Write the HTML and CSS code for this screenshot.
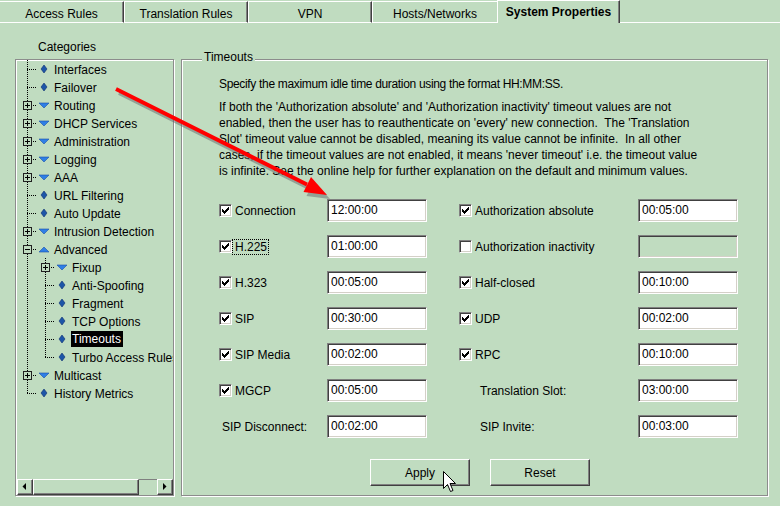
FILE: index.html
```html
<!DOCTYPE html>
<html>
<head>
<meta charset="utf-8">
<title>System Properties - Timeouts</title>
<link rel="stylesheet" href="styles.css">
</head>
<body>
<div class="tabs">
  <div class="tab tab-first">Access Rules</div>
  <div class="tab">Translation Rules</div>
  <div class="tab">VPN</div>
  <div class="tab tab-prev">Hosts/Networks</div>
  <div class="tab tab-active">System Properties</div>
  <div class="tab-fill"></div>
</div>

<div class="main">
  <div class="left">
    <div class="cat-label">Categories</div>
    <div class="tree-box">
      <div class="tree">
        <div class="row"><span class="g tee"></span><svg class="ic" width="16" height="18"><polygon class="dia" points="8,5 11,9 8,13 5,9"/></svg><span class="lbl">Interfaces</span></div>
        <div class="row"><span class="g tee"></span><svg class="ic" width="16" height="18"><polygon class="dia" points="8,5 11,9 8,13 5,9"/></svg><span class="lbl">Failover</span></div>
        <div class="row"><span class="g tee"><i class="exp plus"></i></span><svg class="ic" width="16" height="18"><polygon class="tri" points="3,7 13,7 8,12"/></svg><span class="lbl">Routing</span></div>
        <div class="row"><span class="g tee"><i class="exp plus"></i></span><svg class="ic" width="16" height="18"><polygon class="tri" points="3,7 13,7 8,12"/></svg><span class="lbl">DHCP Services</span></div>
        <div class="row"><span class="g tee"><i class="exp plus"></i></span><svg class="ic" width="16" height="18"><polygon class="tri" points="3,7 13,7 8,12"/></svg><span class="lbl">Administration</span></div>
        <div class="row"><span class="g tee"><i class="exp plus"></i></span><svg class="ic" width="16" height="18"><polygon class="tri" points="3,7 13,7 8,12"/></svg><span class="lbl">Logging</span></div>
        <div class="row"><span class="g tee"><i class="exp plus"></i></span><svg class="ic" width="16" height="18"><polygon class="tri" points="3,7 13,7 8,12"/></svg><span class="lbl">AAA</span></div>
        <div class="row"><span class="g tee"></span><svg class="ic" width="16" height="18"><polygon class="dia" points="8,5 11,9 8,13 5,9"/></svg><span class="lbl">URL Filtering</span></div>
        <div class="row"><span class="g tee"></span><svg class="ic" width="16" height="18"><polygon class="dia" points="8,5 11,9 8,13 5,9"/></svg><span class="lbl">Auto Update</span></div>
        <div class="row"><span class="g tee"><i class="exp plus"></i></span><svg class="ic" width="16" height="18"><polygon class="tri" points="3,7 13,7 8,12"/></svg><span class="lbl">Intrusion Detection</span></div>
        <div class="row"><span class="g tee"><i class="exp minus"></i></span><svg class="ic ic-open" width="16" height="18"><polygon class="tri" points="3,12 13,12 8,7"/></svg><span class="lbl">Advanced</span></div>
        <div class="row"><span class="g vert"></span><span class="g tee"><i class="exp plus"></i></span><svg class="ic" width="16" height="18"><polygon class="tri" points="3,7 13,7 8,12"/></svg><span class="lbl">Fixup</span></div>
        <div class="row"><span class="g vert"></span><span class="g tee"></span><svg class="ic" width="16" height="18"><polygon class="dia" points="8,5 11,9 8,13 5,9"/></svg><span class="lbl">Anti-Spoofing</span></div>
        <div class="row"><span class="g vert"></span><span class="g tee"></span><svg class="ic" width="16" height="18"><polygon class="dia" points="8,5 11,9 8,13 5,9"/></svg><span class="lbl">Fragment</span></div>
        <div class="row"><span class="g vert"></span><span class="g tee"></span><svg class="ic" width="16" height="18"><polygon class="dia" points="8,5 11,9 8,13 5,9"/></svg><span class="lbl">TCP Options</span></div>
        <div class="row"><span class="g vert"></span><span class="g tee"></span><svg class="ic" width="16" height="18"><polygon class="dia" points="8,5 11,9 8,13 5,9"/></svg><span class="lbl sel">Timeouts</span></div>
        <div class="row"><span class="g vert"></span><span class="g elbow"></span><svg class="ic" width="16" height="18"><polygon class="dia" points="8,5 11,9 8,13 5,9"/></svg><span class="lbl">Turbo Access Rules</span></div>
        <div class="row"><span class="g tee"><i class="exp plus"></i></span><svg class="ic" width="16" height="18"><polygon class="tri" points="3,7 13,7 8,12"/></svg><span class="lbl">Multicast</span></div>
        <div class="row"><span class="g elbow"></span><svg class="ic" width="16" height="18"><polygon class="dia" points="8,5 11,9 8,13 5,9"/></svg><span class="lbl">History Metrics</span></div>
      </div>
      <div class="hscroll">
        <div class="sb-btn"><svg width="14" height="14"><polygon points="8,3 8,10 4.5,6.5" fill="#000"/></svg></div>
        <div class="sb-thumb"></div>
        <div class="sb-track"></div>
        <div class="sb-btn"><svg width="14" height="14"><polygon points="5,3 5,10 8.5,6.5" fill="#000"/></svg></div>
      </div>
    </div>
  </div>

  <div class="group">
    <span class="group-title">Timeouts</span>
    <p class="intro">Specify the maximum idle time duration using the format HH:MM:SS.</p>
    <p class="desc">If both the 'Authorization absolute' and 'Authorization inactivity' timeout values are not<br>enabled, then the user has to reauthenticate on 'every' new connection.&nbsp; The 'Translation<br>Slot' timeout value cannot be disabled, meaning its value cannot be infinite.&nbsp; In all other<br>cases, if the timeout values are not enabled, it means 'never timeout' i.e. the timeout value<br>is infinite. See the online help for further explanation on the default and minimum values.</p>

    <div class="form">
      <div class="cell"><span class="cb on"><svg width="11" height="11"><path d="M2 4h1v3h-1zM3 5h1v3h-1zM4 6h1v3h-1zM5 5h1v3h-1zM6 4h1v3h-1zM7 3h1v3h-1zM8 2h1v3h-1z"/></svg></span><span class="cbl">Connection</span></div>
      <div class="cell"><input class="field" type="text" value="12:00:00"></div>
      <div class="cell c3"><span class="cb on"><svg width="11" height="11"><path d="M2 4h1v3h-1zM3 5h1v3h-1zM4 6h1v3h-1zM5 5h1v3h-1zM6 4h1v3h-1zM7 3h1v3h-1zM8 2h1v3h-1z"/></svg></span><span class="cbl">Authorization absolute</span></div>
      <div class="cell"><input class="field" type="text" value="00:05:00"></div>

      <div class="cell"><span class="cb on"><svg width="11" height="11"><path d="M2 4h1v3h-1zM3 5h1v3h-1zM4 6h1v3h-1zM5 5h1v3h-1zM6 4h1v3h-1zM7 3h1v3h-1zM8 2h1v3h-1z"/></svg></span><span class="cbl focus">H.225</span></div>
      <div class="cell"><input class="field" type="text" value="01:00:00"></div>
      <div class="cell c3"><span class="cb"></span><span class="cbl">Authorization inactivity</span></div>
      <div class="cell"><input class="field off" type="text" value="" disabled></div>

      <div class="cell"><span class="cb on"><svg width="11" height="11"><path d="M2 4h1v3h-1zM3 5h1v3h-1zM4 6h1v3h-1zM5 5h1v3h-1zM6 4h1v3h-1zM7 3h1v3h-1zM8 2h1v3h-1z"/></svg></span><span class="cbl">H.323</span></div>
      <div class="cell"><input class="field" type="text" value="00:05:00"></div>
      <div class="cell c3"><span class="cb on"><svg width="11" height="11"><path d="M2 4h1v3h-1zM3 5h1v3h-1zM4 6h1v3h-1zM5 5h1v3h-1zM6 4h1v3h-1zM7 3h1v3h-1zM8 2h1v3h-1z"/></svg></span><span class="cbl">Half-closed</span></div>
      <div class="cell"><input class="field" type="text" value="00:10:00"></div>

      <div class="cell"><span class="cb on"><svg width="11" height="11"><path d="M2 4h1v3h-1zM3 5h1v3h-1zM4 6h1v3h-1zM5 5h1v3h-1zM6 4h1v3h-1zM7 3h1v3h-1zM8 2h1v3h-1z"/></svg></span><span class="cbl">SIP</span></div>
      <div class="cell"><input class="field" type="text" value="00:30:00"></div>
      <div class="cell c3"><span class="cb on"><svg width="11" height="11"><path d="M2 4h1v3h-1zM3 5h1v3h-1zM4 6h1v3h-1zM5 5h1v3h-1zM6 4h1v3h-1zM7 3h1v3h-1zM8 2h1v3h-1z"/></svg></span><span class="cbl">UDP</span></div>
      <div class="cell"><input class="field" type="text" value="00:02:00"></div>

      <div class="cell"><span class="cb on"><svg width="11" height="11"><path d="M2 4h1v3h-1zM3 5h1v3h-1zM4 6h1v3h-1zM5 5h1v3h-1zM6 4h1v3h-1zM7 3h1v3h-1zM8 2h1v3h-1z"/></svg></span><span class="cbl">SIP Media</span></div>
      <div class="cell"><input class="field" type="text" value="00:02:00"></div>
      <div class="cell c3"><span class="cb on"><svg width="11" height="11"><path d="M2 4h1v3h-1zM3 5h1v3h-1zM4 6h1v3h-1zM5 5h1v3h-1zM6 4h1v3h-1zM7 3h1v3h-1zM8 2h1v3h-1z"/></svg></span><span class="cbl">RPC</span></div>
      <div class="cell"><input class="field" type="text" value="00:10:00"></div>

      <div class="cell"><span class="cb on"><svg width="11" height="11"><path d="M2 4h1v3h-1zM3 5h1v3h-1zM4 6h1v3h-1zM5 5h1v3h-1zM6 4h1v3h-1zM7 3h1v3h-1zM8 2h1v3h-1z"/></svg></span><span class="cbl">MGCP</span></div>
      <div class="cell"><input class="field" type="text" value="00:05:00"></div>
      <div class="cell c3"><span class="plain-r">Translation Slot:</span></div>
      <div class="cell"><input class="field" type="text" value="03:00:00"></div>

      <div class="cell"><span class="plain-l">SIP Disconnect:</span></div>
      <div class="cell"><input class="field" type="text" value="00:02:00"></div>
      <div class="cell c3"><span class="plain-r">SIP Invite:</span></div>
      <div class="cell"><input class="field" type="text" value="00:03:00"></div>
    </div>

    <div class="buttons">
      <button class="btn" type="button">Apply</button>
      <button class="btn" type="button">Reset</button>
    </div>
  </div>
</div>

<svg class="annot" width="780" height="506" viewBox="0 0 780 506">
  <g class="shadow" transform="translate(3,4)">
    <line x1="116" y1="89" x2="307" y2="184.5" stroke-width="4"/>
    <polygon points="327,195 303.5,192 311,177"/>
  </g>
  <g class="red">
    <line x1="116" y1="89" x2="307" y2="184.5" stroke-width="4"/>
    <polygon points="327,195 303.5,192 311,177"/>
  </g>
</svg>

<svg class="cursor" width="13" height="22" viewBox="0 0 13 22">
  <path d="M0.5 0.5 L0.5 17.5 L4.5 13.5 L7.5 20.5 L10 19.5 L7 12.5 L12.5 12.5 Z" fill="#fff" stroke="#000" stroke-width="1"/>
</svg>
</body>
</html>
```

FILE: styles.css
```css
* { box-sizing: border-box; }

html, body { margin: 0; padding: 0; }

body {
  width: 780px;
  height: 506px;
  overflow: hidden;
  position: relative;
  background: #c0dcc0;
  color: #000;
  font: 12px "Liberation Sans", Arial, sans-serif;
}

/* ---------- tabs ---------- */
.tabs {
  display: flex;
  align-items: flex-end;
  height: 23px;
}

.tab {
  flex: none;
  width: 124px;
  height: 22px;
  padding-top: 5px;
  line-height: 14px;
  text-align: center;
  white-space: nowrap;
  border: 1px solid #fff;
  border-right-color: #404040;
  box-shadow: inset -1px 0 0 #808080;
}

.tab-first { margin-left: -1px; width: 125px; }

.tab-prev {
  width: 125px;
  border-right: none;
  box-shadow: none;
}

.tab-active {
  width: 123px;
  height: 23px;
  padding-top: 4px;
  font-weight: bold;
  border-bottom: none;
}

.tab-fill {
  flex: 1;
  height: 1px;
  background: #fff;
}

/* ---------- main ---------- */
.main {
  display: flex;
  gap: 7px;
  padding: 17px 0 0 15px;
}

.left {
  display: flex;
  flex-direction: column;
  width: 159px;
}

.cat-label {
  height: 14px;
  line-height: 14px;
  padding-left: 23px;
  margin-bottom: 5px;
}

.tree-box {
  display: flex;
  flex-direction: column;
  height: 437px;
  border: 1px solid #8c8c8c;
  box-shadow: 1px 1px 0 #fff, inset 1px 1px 0 #fff;
}

.tree {
  flex: 1;
  padding-left: 2px;
  overflow: hidden;
}

.row {
  display: flex;
  height: 18px;
  white-space: nowrap;
}

.g {
  flex: none;
  display: flex;
  align-items: flex-start;
  width: 18px;
  height: 18px;
  padding: 5px 0 0 5px;
  background-repeat: no-repeat;
}

.g.tee {
  background-image:
    repeating-linear-gradient(to bottom, #000 0 1px, transparent 1px 2px),
    repeating-linear-gradient(to right, #000 0 1px, transparent 1px 2px);
  background-size: 1px 18px, 9px 1px;
  background-position: 9px 0, 9px 9px;
}

.g.elbow {
  background-image:
    repeating-linear-gradient(to bottom, #000 0 1px, transparent 1px 2px),
    repeating-linear-gradient(to right, #000 0 1px, transparent 1px 2px);
  background-size: 1px 10px, 9px 1px;
  background-position: 9px 0, 9px 9px;
}

.g.vert {
  background-image: repeating-linear-gradient(to bottom, #000 0 1px, transparent 1px 2px);
  background-size: 1px 18px;
  background-position: 9px 0;
}

.exp {
  display: block;
  width: 9px;
  height: 9px;
  border: 1px solid #202020;
  background-color: #c0dcc0;
  background-repeat: no-repeat;
}

.exp.plus {
  background-image: linear-gradient(#000, #000), linear-gradient(#000, #000);
  background-size: 5px 1px, 1px 5px;
  background-position: 1px 3px, 3px 1px;
}

.exp.minus {
  background-image: linear-gradient(#000, #000);
  background-size: 5px 1px;
  background-position: 1px 3px;
}

.ic { flex: none; display: block; }

.dia { fill: #1d56a8; stroke: #0d2f6e; stroke-width: 0.6; }
.tri { fill: #2f7fe6; stroke: #1a4fa8; stroke-width: 0.6; }

.lbl {
  margin-left: 2px;
  line-height: 20px;
}

.lbl.sel {
  align-self: center;
  line-height: 15px;
  padding: 1px 2px 0 1px;
  margin-left: 1px;
  background: #000;
  color: #fff;
}

/* horizontal scrollbar */
.hscroll {
  display: flex;
  height: 16px;
  margin-left: 1px;
}

.sb-btn, .sb-thumb {
  flex: none;
  height: 16px;
  background: #c0dcc0;
  border: 1px solid;
  border-color: #fff #404040 #404040 #fff;
  box-shadow: inset -1px -1px 0 #808080;
}

.sb-btn { width: 16px; }
.sb-btn svg { display: block; }

.sb-thumb { width: 106px; }

.sb-track {
  flex: 1;
  border-top: 1px solid #808080;
  background: #c0dcc0;
}

/* ---------- timeouts group ---------- */
.group {
  position: relative;
  width: 587px;
  height: 437px;
  margin-top: 19px;
  padding: 16px 0 0 37px;
  border: 1px solid #8c8c8c;
  box-shadow: 1px 1px 0 #fff, inset 1px 1px 0 #fff;
}

.group-title {
  position: absolute;
  left: 20px;
  top: -10px;
  padding: 0 2px;
  line-height: 14px;
  background: #c0dcc0;
}

.intro, .desc {
  margin: 0;
  line-height: 16px;
  white-space: nowrap;
}

.intro { letter-spacing: -0.33px; }

.desc { margin-top: 7px; }

.form {
  display: grid;
  grid-template-columns: 108px 100px 211px 100px;
  grid-auto-rows: 23px;
  row-gap: 13px;
  margin-top: 20px;
}

.cell {
  display: flex;
  align-items: center;
  white-space: nowrap;
}

.cell.c3 { padding-left: 32px; }

.cb {
  flex: none;
  display: block;
  width: 13px;
  height: 13px;
  background: #fff;
  border: 1px solid;
  border-color: #808080 #fff #fff #808080;
  box-shadow: inset 1px 1px 0 #404040, inset -1px -1px 0 #d4d0c8;
}

.cb svg { display: block; fill: #000; }

.cbl {
  margin-left: 3px;
  line-height: 14px;
}

.cbl.focus {
  margin-left: 1px;
  padding: 0 1px 0 2px;
  outline: 1px dotted #000;
}

.plain-l { padding-left: 3px; }
.plain-r { padding-left: 21px; }

.field {
  width: 100px;
  height: 23px;
  margin: 0;
  padding: 0 0 2px 3px;
  font: 12px "Liberation Sans", Arial, sans-serif;
  color: #000;
  background: #fff;
  border: 1px solid;
  border-color: #808080 #fff #fff #808080;
  box-shadow: inset 1px 1px 0 #404040, inset -1px -1px 0 #d4d0c8;
  border-radius: 0;
  outline: none;
}

.field.off { background: #c0dcc0; }

.buttons {
  display: flex;
  gap: 20px;
  margin: 21px 0 0 151px;
}

.btn {
  width: 100px;
  height: 27px;
  margin: 0;
  padding: 0;
  font: 12px "Liberation Sans", Arial, sans-serif;
  color: #000;
  background: #c0dcc0;
  border: 1px solid;
  border-color: #fff #404040 #404040 #fff;
  box-shadow: inset -1px -1px 0 #808080;
  border-radius: 0;
}

/* ---------- overlays ---------- */
.annot {
  position: absolute;
  left: 0;
  top: 0;
  pointer-events: none;
}

.annot .shadow line { stroke: rgba(90, 90, 100, 0.45); }
.annot .shadow polygon { fill: rgba(90, 90, 100, 0.45); }
.annot .red line { stroke: #ff0000; }
.annot .red polygon { fill: #ff0000; }

.cursor {
  position: absolute;
  left: 443px;
  top: 471px;
  pointer-events: none;
}
```
